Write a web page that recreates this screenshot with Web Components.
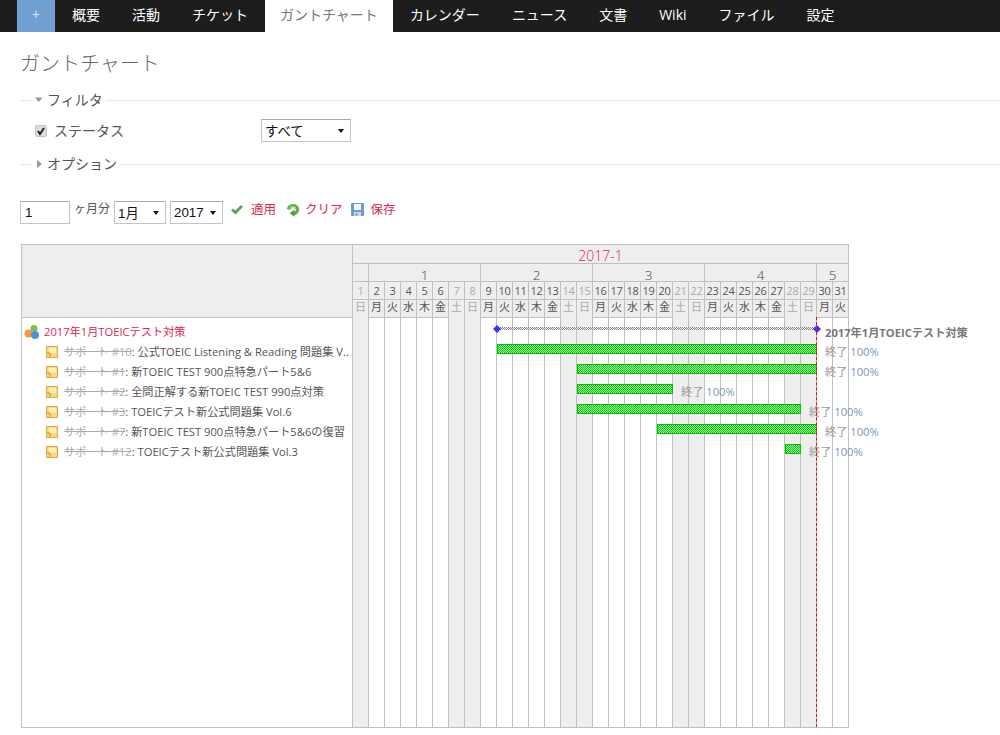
<!DOCTYPE html>
<html lang="ja">
<head>
<meta charset="utf-8">
<title>ガントチャート</title>
<style>
  html, body { margin: 0; background: #fff; }
  body { font: 14px "Open Sans", "Noto Sans CJK JP", sans-serif; color: #555; overflow: hidden; }
</style>
</head>
<body>
<app-nav></app-nav>
<gantt-page>
  <page-title>ガントチャート</page-title>
  <filter-group label="フィルタ" open>
    <status-filter></status-filter>
  </filter-group>
  <filter-group label="オプション"></filter-group>
  <gantt-toolbar></gantt-toolbar>
  <gantt-chart></gantt-chart>
</gantt-page>

<script>
const FONT = '"Open Sans", "Noto Sans CJK JP", sans-serif';

class AppNav extends HTMLElement {
  constructor() {
    super();
    this.attachShadow({ mode: 'open' });
  }

  connectedCallback() {
    const tabs = ['概要', '活動', 'チケット', 'ガントチャート', 'カレンダー', 'ニュース', '文書', 'Wiki', 'ファイル', '設定'];
    this.shadowRoot.innerHTML = `
      <style>
        :host { display: flex; height: 32px; background: #1d1d1d; padding-left: 17px; font: 14px ${FONT}; }
        a { display: flex; align-items: center; padding: 0 16px 4px; box-sizing: border-box; color: #fff; white-space: nowrap; }
        .plus { width: 38px; margin-right: 1px; padding: 0 0 4px; justify-content: center; background: #709fd2; color: #dfe9f5; }
        .active { background: #fff; color: #777; margin: 0 1px; padding: 0 15px 4px; }
      </style>
      <a class="plus">+</a>
      ${tabs.map(t => `<a class="${t === 'ガントチャート' ? 'active' : ''}">${t}</a>`).join('')}
    `;
  }
}
customElements.define('app-nav', AppNav);

class GanttPage extends HTMLElement {
  constructor() {
    super();
    this.attachShadow({ mode: 'open' }).innerHTML = `
      <style>
        :host { display: block; padding-left: 20px; }
      </style>
      <slot></slot>
    `;
  }
}
customElements.define('gantt-page', GanttPage);

class PageTitle extends HTMLElement {
  constructor() {
    super();
    this.attachShadow({ mode: 'open' }).innerHTML = `
      <style>
        :host { display: block; height: 58px; padding-top: 18px; box-sizing: border-box; font: 300 20px/28px ${FONT}; color: #666; }
      </style>
      <slot></slot>
    `;
  }
}
customElements.define('page-title', PageTitle);

class FilterGroup extends HTMLElement {
  constructor() {
    super();
    this.attachShadow({ mode: 'open' });
  }

  connectedCallback() {
    const open = this.hasAttribute('open');
    this.shadowRoot.innerHTML = `
      <style>
        :host { display: block; }
        .legend { display: flex; align-items: center; height: 20px; font: 14px/20px ${FONT}; color: #555; }
        .line { height: 1px; background: #e4e4e4; }
        .lead { width: 11px; margin-right: 4px; }
        .rest { flex: 1; margin-left: 3px; }
        svg { display: block; width: 8px; height: 8px; margin-right: 4px; }
        .body { padding: 9px 0 12px 15px; }
      </style>
      <div class="legend">
        <span class="line lead"></span>
        <svg viewBox="0 0 8 8"><path fill="#999" d="${open ? 'M0 1.500h7.500L3.750 6z' : 'M2 0l5 4-5 4z'}"/></svg>
        <span>${this.getAttribute('label')}</span>
        <span class="line rest"></span>
      </div>
      ${open ? '<div class="body"><slot></slot></div>' : ''}
    `;
  }
}
customElements.define('filter-group', FilterGroup);

class SelectBox extends HTMLElement {
  constructor() {
    super();
    this.attachShadow({ mode: 'open' }).innerHTML = `
      <style>
        :host { display: flex; align-items: center; justify-content: space-between; box-sizing: border-box; height: 23px;
          padding: 0 6px 0 3px; border: 1px solid #c4c4c4; border-top-color: #aaa; background: #fff;
          font: 13.33px "Liberation Sans", "Noto Sans CJK JP", sans-serif; color: #111; }
        i { width: 0; height: 0; border: 3.5px solid transparent; border-top: 4px solid #111; border-bottom: 0; }
      </style>
      <span><slot></slot></span><i></i>
    `;
  }
}
customElements.define('select-box', SelectBox);

class StatusFilter extends HTMLElement {
  constructor() {
    super();
    this.attachShadow({ mode: 'open' }).innerHTML = `
      <style>
        :host { display: flex; align-items: center; height: 23px; font: 14px ${FONT}; color: #555; }
        .check { width: 12px; height: 12px; box-sizing: border-box; border: 1px solid #c4c4c4; border-radius: 2px; background: #dcdcdc; }
        svg { display: block; width: 10px; height: 10px; }
        span { width: 207px; margin: -1px 0 0 7px; }
        select-box { width: 90px; }
      </style>
      <div class="check"><svg viewBox="0 0 10 10"><path fill="none" stroke="#222" stroke-width="2" d="M2 5l2 3 4-6"/></svg></div>
      <span>ステータス</span>
      <select-box>すべて</select-box>
    `;
  }
}
customElements.define('status-filter', StatusFilter);

class GanttToolbar extends HTMLElement {
  constructor() {
    super();
    this.attachShadow({ mode: 'open' }).innerHTML = `
      <style>
        :host { display: flex; align-items: center; height: 23px; margin-top: 27px; font: 12.5px ${FONT}; color: #555; }
        .months { display: flex; align-items: center; box-sizing: border-box; width: 50px; height: 23px; padding-left: 4px;
          border: 1px solid #c4c4c4; border-top-color: #aaa; font: 13.33px "Liberation Sans", sans-serif; color: #111; }
        .unit { align-self: flex-start; width: 40px; margin-left: 4px; font-size: 12px; line-height: 15px; white-space: nowrap; }
        .month { width: 52px; margin-right: 4px; }
        .year { width: 53px; margin-right: 8px; }
        a { display: flex; align-self: flex-start; height: 15px; align-items: center; color: #e0254f; white-space: nowrap; }
        svg { display: block; flex: none; }
        .apply svg { margin: 3px 8px 0 0; }
        .apply { margin-right: 10px; }
        .clear svg { margin: 3px 5px 0 0; }
        .clear { margin-right: 8px; }
        .save svg { margin: 2px 7px 0 0; }
      </style>
      <div class="months">1</div>
      <span class="unit">ヶ月分</span>
      <select-box class="month">1月</select-box>
      <select-box class="year">2017</select-box>
      <a class="apply">
        <svg width="12" height="10" viewBox="0 0 12 10"><path fill="#5da35d" d="M0 5.500l2-2 2.300 2L10 0l2 2-7.500 7.500z"/></svg>適用
      </a>
      <a class="clear">
        <svg width="14" height="14" viewBox="0 0 14 14">
          <path fill="none" stroke="#62b04a" stroke-width="3.400" d="M2.400 6.500A4.700 4.700 0 0 1 11.500 6c.4 2.500-1.500 4.500-4 4.500"/>
          <path fill="#4d9c3a" d="M8.500 6.800v7l-5-3.500z"/>
          <path fill="#b4e29a" d="M4 5.500C5 2.500 9 2.500 10 5L8.500 6C7.500 4.500 6 4.500 5.500 6z"/>
        </svg>クリア
      </a>
      <a class="save">
        <svg width="13" height="13" viewBox="0 0 13 13">
          <rect width="13" height="13" rx="1" fill="#6f9bcb"/>
          <rect x="3" y="1" width="7" height="6" fill="#f4f7fb"/>
          <rect x="3" y="9" width="7" height="4" fill="#cfdbe9"/>
          <rect x="4.500" y="10" width="2" height="3" fill="#7fa5cf"/>
        </svg>保存
      </a>
    `;
  }
}
customElements.define('gantt-toolbar', GanttToolbar);

class TicketRow extends HTMLElement {
  constructor() {
    super();
    this.attachShadow({ mode: 'open' });
  }

  connectedCallback() {
    this.shadowRoot.innerHTML = `
      <style>
        :host { display: flex; align-items: center; height: 20px; padding-left: 24px; font: 11.2px/20px ${FONT}; color: #555; }
        svg { display: block; flex: none; width: 12px; height: 12px; margin-right: 6px; }
        .text { white-space: nowrap; }
        s { color: #aaa; }
      </style>
      <svg viewBox="0 0 12 12">
        <rect x=".5" y=".5" width="11" height="11" fill="#ffd76e" stroke="#dca75c"/>
        <rect x="3" y="2" width="7" height="5" fill="#fff0b8"/>
        <path fill="none" stroke="#d08a3e" d="M1 7h3v4"/>
      </svg>
      <span class="text"><s>サポート #${this.getAttribute('num')}</s>: ${this.getAttribute('title')}</span>
    `;
  }
}
customElements.define('ticket-row', TicketRow);

const TICKETS = [
  { num: 10, title: '公式TOEIC Listening &amp; Reading 問題集 V..', from: 145, width: 320 },
  { num: 1, title: '新TOEIC TEST 900点特急パート5&amp;6', from: 225, width: 240 },
  { num: 2, title: '全問正解する新TOEIC TEST 990点対策', from: 225, width: 96 },
  { num: 3, title: 'TOEICテスト新公式問題集 Vol.6', from: 225, width: 224 },
  { num: 7, title: '新TOEIC TEST 900点特急パート5&amp;6の復習', from: 305, width: 160 },
  { num: 12, title: 'TOEICテスト新公式問題集 Vol.3', from: 433, width: 16 },
];
const WEEKDAYS = ['日', '月', '火', '水', '木', '金', '土'];

class GanttChart extends HTMLElement {
  constructor() {
    super();
    this.attachShadow({ mode: 'open' });
  }

  connectedCallback() {
    const days = Array.from({ length: 31 }, (_, i) => ({ n: i + 1, wd: WEEKDAYS[i % 7], off: i % 7 === 0 || i % 7 === 6 }));
    const weeks = [['', 1], ['1', 7], ['2', 7], ['3', 7], ['4', 7], ['5', 2]];
    this.shadowRoot.innerHTML = `
      <style>
        :host { display: flex; width: 828px; height: 484px; margin: 20px 0 0 1px; box-sizing: border-box;
          border: 1px solid #c0c0c0; font: 11.2px ${FONT}; color: #555; }
        .left { width: 330px; flex: none; }
        .left-head { height: 73px; background: #eee; border-bottom: 1px solid #c0c0c0; box-sizing: border-box; }
        .list { padding-top: 4px; }
        .project { display: flex; align-items: center; height: 20px; padding-left: 2px; color: #e0254f; line-height: 20px; }
        .project svg { display: block; width: 16px; height: 16px; margin-right: 4px; }
        .timeline { position: relative; flex: none; width: 496px; border-left: 1px solid #c0c0c0; display: grid;
          grid-template-columns: 15px repeat(30, 16px); grid-template-rows: 19px 18px 18px 18px 1fr; }
        .cell { box-sizing: border-box; background: #eee; border-bottom: 1px solid #c0c0c0; border-left: 1px solid #c0c0c0;
          display: flex; align-items: center; justify-content: center; line-height: 17px; white-space: nowrap; }
        .cell.first { border-left: 0; }
        .year { grid-column: 1 / -1; border-left: 0; color: #e0254f; font-size: 14px; padding-top: 3px; font-weight: 300; }
        .week { font-size: 13.5px; padding-top: 6px; font-weight: 300; color: #444; }
        .day { font-size: 11px; letter-spacing: -.2px; padding-bottom: 1px; }
        .wd { font-size: 11px; padding-bottom: 4px; }
        .off { color: #aaa; }
        .wd.off { border-bottom: 0; padding-bottom: 5px; }
        .col { box-sizing: border-box; border-left: 1px solid #c0c0c0; background: #fff; }
        .col.first { border-left: 0; }
        .col.off { background: #eee; }
        .canvas { position: absolute; left: -1px; right: 0; top: 73px; bottom: 0; }
        .bar { position: absolute; height: 10px; box-sizing: border-box; border: 1px solid #00c000;
          background: repeating-conic-gradient(#00cc00 0 25%, #a8eca8 0 50%) 0 0 / 2px 2px; }
        .summary { position: absolute; left: 145px; width: 320px; top: 9px; height: 3px;
          background: repeating-conic-gradient(#777 0 25%, #fff 0 50%) 0 0 / 2px 2px; }
        .diamond { position: absolute; top: 7px; width: 8px; height: 8px; background: #3535ff; clip-path: polygon(50% 0, 100% 50%, 50% 100%, 0 50%); }
        .today { position: absolute; left: 464px; top: -1px; bottom: 0; border-left: 1px dashed #f00; }
        .label { position: absolute; height: 20px; line-height: 20px; color: #999; white-space: nowrap; }
        .label b { color: #7f96b8; font-weight: 400; }
        .label.bold { color: #777; font-weight: 700; }
      </style>
      <div class="left">
        <div class="left-head"></div>
        <div class="list">
          <div class="project">
            <svg viewBox="0 0 16 16">
              <circle cx="10" cy="4.500" r="3.500" fill="#7cc24a"/>
              <circle cx="4.500" cy="9.500" r="4" fill="#f39a3a"/>
              <circle cx="11" cy="11" r="4" fill="#4f8fe0"/>
            </svg>
            <span>2017年1月TOEICテスト対策</span>
          </div>
          ${TICKETS.map(t => `<ticket-row num="${t.num}" title="${t.title}"></ticket-row>`).join('')}
        </div>
      </div>
      <div class="timeline">
        <div class="cell year">2017-1</div>
        ${weeks.map(([label, span], i) => `<div class="cell week${i ? '' : ' first'}" style="grid-column: span ${span}">${label}</div>`).join('')}
        ${days.map(d => `<div class="cell day${d.off ? ' off' : ''}${d.n === 1 ? ' first' : ''}">${d.n}</div>`).join('')}
        ${days.map(d => `<div class="cell wd${d.off ? ' off' : ''}${d.n === 1 ? ' first' : ''}">${d.wd}</div>`).join('')}
        ${days.map(d => `<div class="col${d.off ? ' off' : ''}${d.n === 1 ? ' first' : ''}"></div>`).join('')}
        <div class="canvas">
          <div class="summary"></div>
          <div class="diamond" style="left: 141px"></div>
          <div class="diamond" style="left: 461px"></div>
          <div class="label bold" style="left: 473px; top: 5px">2017年1月TOEICテスト対策</div>
          ${TICKETS.map((t, i) => `
            <div class="bar" style="left: ${t.from}px; width: ${t.width}px; top: ${26 + i * 20}px"></div>
            <div class="label" style="left: ${t.from + t.width + 8}px; top: ${24 + i * 20}px">終了 <b>100%</b></div>
          `).join('')}
          <div class="today"></div>
        </div>
      </div>
    `;
  }
}
customElements.define('gantt-chart', GanttChart);
</script>
</body>
</html>
